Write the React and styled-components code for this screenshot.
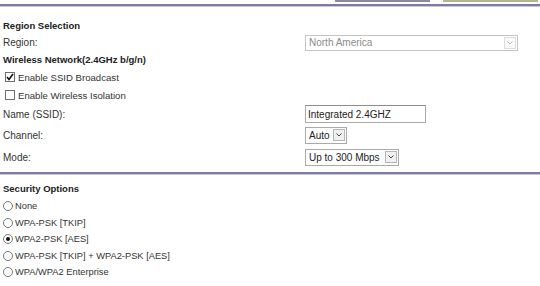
import React from 'react';
import styled, { createGlobalStyle } from 'styled-components';

const GlobalStyle = createGlobalStyle`
  html, body {
    margin: 0;
    padding: 0;
    background: #ffffff;
  }
  body {
    font-family: "Liberation Sans", Arial, sans-serif;
    color: #333333;
    width: 540px;
    height: 286px;
    overflow: hidden;
  }
`;

const ButtonBar = styled.div`
  display: flex;
  justify-content: flex-end;
  align-items: flex-end;
  gap: 13px;
  height: 2px;
  padding-right: 2px;
  overflow: hidden;
`;

const TopButton = styled.div`
  width: 95px;
  height: 20px;
  border-bottom: 2px solid ${p => (p.$tone === 'apply' ? '#b7b58a' : '#8c8a98')};
  box-sizing: border-box;
`;

const Rule = styled.div`
  height: 2px;
  background: #7d79a8;
  border-bottom: 1px solid #c9c7de;
  margin: ${p => p.$margin || '2px 0 0'};
`;

const Form = styled.div`
  display: grid;
  grid-template-columns: 302px 1fr;
  padding-left: 3px;
`;

const Heading = styled.div`
  grid-column: 1 / -1;
  font-weight: bold;
  font-size: 9.5px;
  color: #222222;
  height: ${p => p.$h || 17}px;
  padding-bottom: ${p => p.$pb || 0}px;
  box-sizing: border-box;
  display: flex;
  align-items: ${p => (p.$pb ? 'flex-end' : 'center')};
`;

const Label = styled.div`
  font-size: 10px;
  height: ${p => p.$h || 18}px;
  display: flex;
  align-items: center;
`;

const Control = styled.div`
  height: ${p => p.$h || 18}px;
  display: flex;
  align-items: center;
`;

const CheckRow = styled.label`
  grid-column: 1 / -1;
  display: flex;
  align-items: center;
  gap: 3px;
  height: 18px;
  font-size: 9.6px;
  padding-left: 2px;
`;

const Box = styled.span`
  width: 10px;
  height: 10px;
  border: 1px solid #6f6f6f;
  box-sizing: border-box;
  display: flex;
  align-items: center;
  justify-content: center;
  background: #fff;
`;

const SelectBox = styled.div`
  display: flex;
  align-items: center;
  box-sizing: border-box;
  width: ${p => p.$w}px;
  height: ${p => p.$h || 16}px;
  border: 1px solid ${p => (p.$disabled ? '#c4c4c4' : '#a9a9a9')};
  font-size: 10px;
  color: ${p => (p.$disabled ? '#8a8a8a' : '#222222')};
  padding-left: 3px;
  background: #fff;
`;

const SelectText = styled.span`
  flex: 1;
  white-space: nowrap;
`;

const Arrow = styled.span`
  width: 12px;
  height: 12px;
  margin-right: 1px;
  box-sizing: border-box;
  border: 1px solid ${p => (p.$disabled ? '#dcdcdc' : '#b5b5b5')};
  background: ${p => (p.$disabled ? '#fafafa' : '#f0f0f0')};
  display: flex;
  align-items: center;
  justify-content: center;
`;

const TextInput = styled.div`
  box-sizing: border-box;
  width: 121px;
  height: 18px;
  border: 1px solid #a9a9a9;
  border-top-color: #8e8e8e;
  font-size: 10px;
  color: #222222;
  display: flex;
  align-items: center;
  padding-left: 2px;
`;

const RadioList = styled.div`
  padding: 2px 0 0 3px;
`;

const RadioRow = styled.label`
  display: flex;
  align-items: center;
  gap: 2px;
  height: 16.5px;
  font-size: 9.3px;
`;

const Radio = styled.span`
  width: 10px;
  height: 10px;
  border-radius: 50%;
  border: 1px solid #777777;
  box-sizing: border-box;
  display: flex;
  align-items: center;
  justify-content: center;
  background: #fff;
`;

const Dot = styled.span`
  width: 4px;
  height: 4px;
  border-radius: 50%;
  background: #111111;
`;

const Chevron = ({ disabled }) => (
  <Arrow $disabled={disabled}>
    <svg width="6" height="4" viewBox="0 0 6 4">
      <path d="M0.5 0.5 L3 3 L5.5 0.5" fill="none" stroke={disabled ? '#b8b8b8' : '#444'} strokeWidth="1" />
    </svg>
  </Arrow>
);

const Select = ({ value, width, disabled, height }) => (
  <SelectBox $w={width} $h={height} $disabled={disabled}>
    <SelectText>{value}</SelectText>
    <Chevron disabled={disabled} />
  </SelectBox>
);

const Checkbox = ({ checked, children }) => (
  <CheckRow>
    <Box>
      {checked && (
        <svg width="8" height="8" viewBox="0 0 8 8">
          <path d="M1 4 L3 6.5 L7 1" fill="none" stroke="#111" strokeWidth="1.6" />
        </svg>
      )}
    </Box>
    {children}
  </CheckRow>
);

const securityOptions = [
  'None',
  'WPA-PSK [TKIP]',
  'WPA2-PSK [AES]',
  'WPA-PSK [TKIP] + WPA2-PSK [AES]',
  'WPA/WPA2 Enterprise',
];

const App = () => (
  <>
    <GlobalStyle />
    <ButtonBar>
      <TopButton />
      <TopButton $tone="apply" />
    </ButtonBar>
    <Rule />

    <Form>
      <Heading $h={27} $pb={3}>Region Selection</Heading>
      <Label $h={17}>Region:</Label>
      <Control $h={17}>
        <Select value="North America" width={213} disabled />
      </Control>

      <Heading $h={17}>Wireless Network(2.4GHz b/g/n)</Heading>
      <Checkbox checked>Enable SSID Broadcast</Checkbox>
      <Checkbox>Enable Wireless Isolation</Checkbox>

      <Label $h={20}>Name (SSID):</Label>
      <Control $h={20}>
        <TextInput>Integrated 2.4GHZ</TextInput>
      </Control>

      <Label $h={22}>Channel:</Label>
      <Control $h={22}>
        <Select value="Auto" width={42} height={17} />
      </Control>

      <Label $h={22}>Mode:</Label>
      <Control $h={22}>
        <Select value="Up to 300 Mbps" width={94} height={17} />
      </Control>
    </Form>

    <Rule $margin="4px 0 0" />

    <Form>
      <Heading $h={21} $pb={2}>Security Options</Heading>
    </Form>
    <RadioList>
      {securityOptions.map(opt => (
        <RadioRow key={opt}>
          <Radio>{opt === 'WPA2-PSK [AES]' && <Dot />}</Radio>
          {opt}
        </RadioRow>
      ))}
    </RadioList>
  </>
);

export default App;
